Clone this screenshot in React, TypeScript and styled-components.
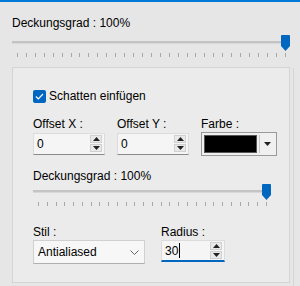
import React from "react";
import styled, { createGlobalStyle } from "styled-components";

const Global = createGlobalStyle`
  html, body { margin: 0; padding: 0; }
  body { background: #e6e6e6; font-family: "Liberation Sans", Arial, sans-serif; font-size: 12px; color: #000; }
`;

const Page = styled.div`
  width: 300px;
  height: 286px;
  box-sizing: border-box;
  border-top: 2px solid #0078d7;
  padding: 13px 10px 0 12px;
  display: flex;
  flex-direction: column;
  position: relative;
`;

const EdgeLine = styled.div`
  position: absolute;
  right: 6px;
  top: 66px;
  bottom: 0;
  width: 1px;
  background: #d6d6d6;
`;

const Label = styled.div`
  font-size: 12px;
  line-height: 16px;
  height: 16px;
  white-space: nowrap;
`;

const SliderWrap = styled.div<{ $w: number; $mt: number }>`
  width: ${(p) => p.$w}px;
  height: 26px;
  position: relative;
  margin-top: ${(p) => p.$mt}px;
`;

const Track = styled.div`
  position: absolute;
  left: 0;
  right: 0;
  top: 6px;
  height: 2px;
  background: #c4c4c4;
  border-bottom: 1px solid #d8d8d8;
`;

const Thumb = styled.svg`
  position: absolute;
  right: 0;
  top: 0;
`;

const Ticks = styled.div`
  position: absolute;
  left: 5px;
  right: 4px;
  top: 18px;
  height: 4px;
  display: flex;
  justify-content: space-between;
`;

const Tick = styled.span`
  width: 1px;
  height: 4px;
  background: #a8a8a8;
`;

const Panel = styled.div`
  margin-top: 6px;
  width: 278px;
  height: 216px;
  box-sizing: border-box;
  background: #ebebeb;
  border: 1px solid #d4d4d4;
  padding: 20px 0 0 20px;
  display: flex;
  flex-direction: column;
`;

const CheckRow = styled.label`
  display: flex;
  align-items: center;
  gap: 3px;
  height: 16px;
  font-size: 12px;
`;

const Box = styled.span`
  width: 13px;
  height: 13px;
  border-radius: 2px;
  background: #0067c0;
  display: inline-flex;
  align-items: center;
  justify-content: center;
`;

const FieldRow = styled.div`
  display: flex;
  gap: 12px;
  margin-top: 12px;
`;

const Field = styled.div<{ $gap: number }>`
  display: flex;
  flex-direction: column;
  gap: ${(p) => p.$gap}px;
`;

const Spin = styled.div<{ $w: number; $focus?: boolean }>`
  width: ${(p) => p.$w}px;
  height: 22px;
  box-sizing: border-box;
  background: #f5f5f5;
  border: 1px solid #dcdcdc;
  border-bottom: ${(p) => (p.$focus ? "2px solid #0067c0" : "1px solid #8a8a8a")};
  display: flex;
  align-items: center;
  padding-left: 3px;
  position: relative;
  font-size: 12px;
`;

const Caret = styled.span`
  display: inline-block;
  width: 1px;
  height: 15px;
  background: #000;
  margin-left: 1px;
`;

const SpinBtns = styled.div`
  position: absolute;
  right: 2px;
  top: 1px;
  display: flex;
  flex-direction: column;
  gap: 1px;
`;

const SpinBtn = styled.div`
  width: 12px;
  height: 8px;
  background: #e9e9e9;
  border: 1px solid #d0d0d0;
  box-sizing: border-box;
  display: flex;
  align-items: center;
  justify-content: center;
`;

const ColorBox = styled.div`
  width: 76px;
  height: 24px;
  box-sizing: border-box;
  border: 1px solid #9a9a9a;
  background: #f0f0f0;
  display: flex;
  align-items: center;
  padding: 2px;
  gap: 2px;
`;

const Swatch = styled.div`
  width: 53px;
  height: 18px;
  background: #000;
  border: 1px solid #555;
  box-sizing: border-box;
`;

const DropBtn = styled.div`
  flex: 1;
  height: 18px;
  border-left: 1px solid #c8c8c8;
  display: flex;
  align-items: center;
  justify-content: center;
`;

const Inner = styled.div`
  margin-top: 12px;
  display: flex;
  flex-direction: column;
`;

const BottomRow = styled.div`
  display: flex;
  gap: 16px;
  margin-top: 14px;
`;

const Select = styled.div`
  width: 112px;
  height: 24px;
  box-sizing: border-box;
  background: #f7f7f7;
  border: 1px solid #d0d0d0;
  border-bottom-color: #b0b0b0;
  display: flex;
  align-items: center;
  justify-content: space-between;
  padding: 0 5px 0 4px;
  font-size: 12px;
`;

const Up = () => (
  <svg width="7" height="4" viewBox="0 0 7 4"><path d="M0 4L3.5 0L7 4Z" fill="#222" /></svg>
);
const Down = () => (
  <svg width="7" height="4" viewBox="0 0 7 4"><path d="M0 0L3.5 4L7 0Z" fill="#222" /></svg>
);

const Slider = ({ w, ticks, mt }: { w: number; ticks: number; mt: number }) => (
  <SliderWrap $w={w} $mt={mt}>
    <Track />
    <Ticks>
      {Array.from({ length: ticks }).map((_, i) => (
        <Tick key={i} />
      ))}
    </Ticks>
    <Thumb width="9" height="16" viewBox="0 0 9 16">
      <path d="M0 1Q0 0 1 0H8Q9 0 9 1V11L4.5 16L0 11Z" fill="#0067c0" />
    </Thumb>
  </SliderWrap>
);

const SpinField = ({ label, value, w, focus, gap }: { label: string; value: string; w: number; focus?: boolean; gap: number }) => (
  <Field $gap={gap}>
    <Label>{label}</Label>
    <Spin $w={w} $focus={focus}>
      {value}
      {focus && <Caret />}
      <SpinBtns>
        <SpinBtn><Up /></SpinBtn>
        <SpinBtn><Down /></SpinBtn>
      </SpinBtns>
    </Spin>
  </Field>
);

export default function App() {
  return (
    <>
      <Global />
      <Page>
        <EdgeLine />
        <Label>Deckungsgrad : 100%</Label>
        <Slider w={278} ticks={31} mt={4} />
        <Panel>
          <CheckRow>
            <Box>
              <svg width="9" height="7" viewBox="0 0 9 7"><path d="M1 3.5L3.3 5.8L8 1" stroke="#fff" strokeWidth="1.2" fill="none" /></svg>
            </Box>
            Schatten einfügen
          </CheckRow>
          <FieldRow>
            <SpinField label="Offset X :" value="0" w={72} gap={1} />
            <SpinField label="Offset Y :" value="0" w={72} gap={1} />
            <Field $gap={0}>
              <Label>Farbe :</Label>
              <ColorBox>
                <Swatch />
                <DropBtn><Down /></DropBtn>
              </ColorBox>
            </Field>
          </FieldRow>
          <Inner>
            <Label>Deckungsgrad : 100%</Label>
            <Slider w={238} ticks={27} mt={0} />
          </Inner>
          <BottomRow>
            <Field $gap={0}>
              <Label>Stil :</Label>
              <Select>
                Antialiased
                <svg width="9" height="5" viewBox="0 0 9 5"><path d="M0.5 0.5L4.5 4.5L8.5 0.5" stroke="#666" fill="none" /></svg>
              </Select>
            </Field>
            <SpinField label="Radius :" value="30" w={64} focus gap={0} />
          </BottomRow>
        </Panel>
      </Page>
    </>
  );
}
